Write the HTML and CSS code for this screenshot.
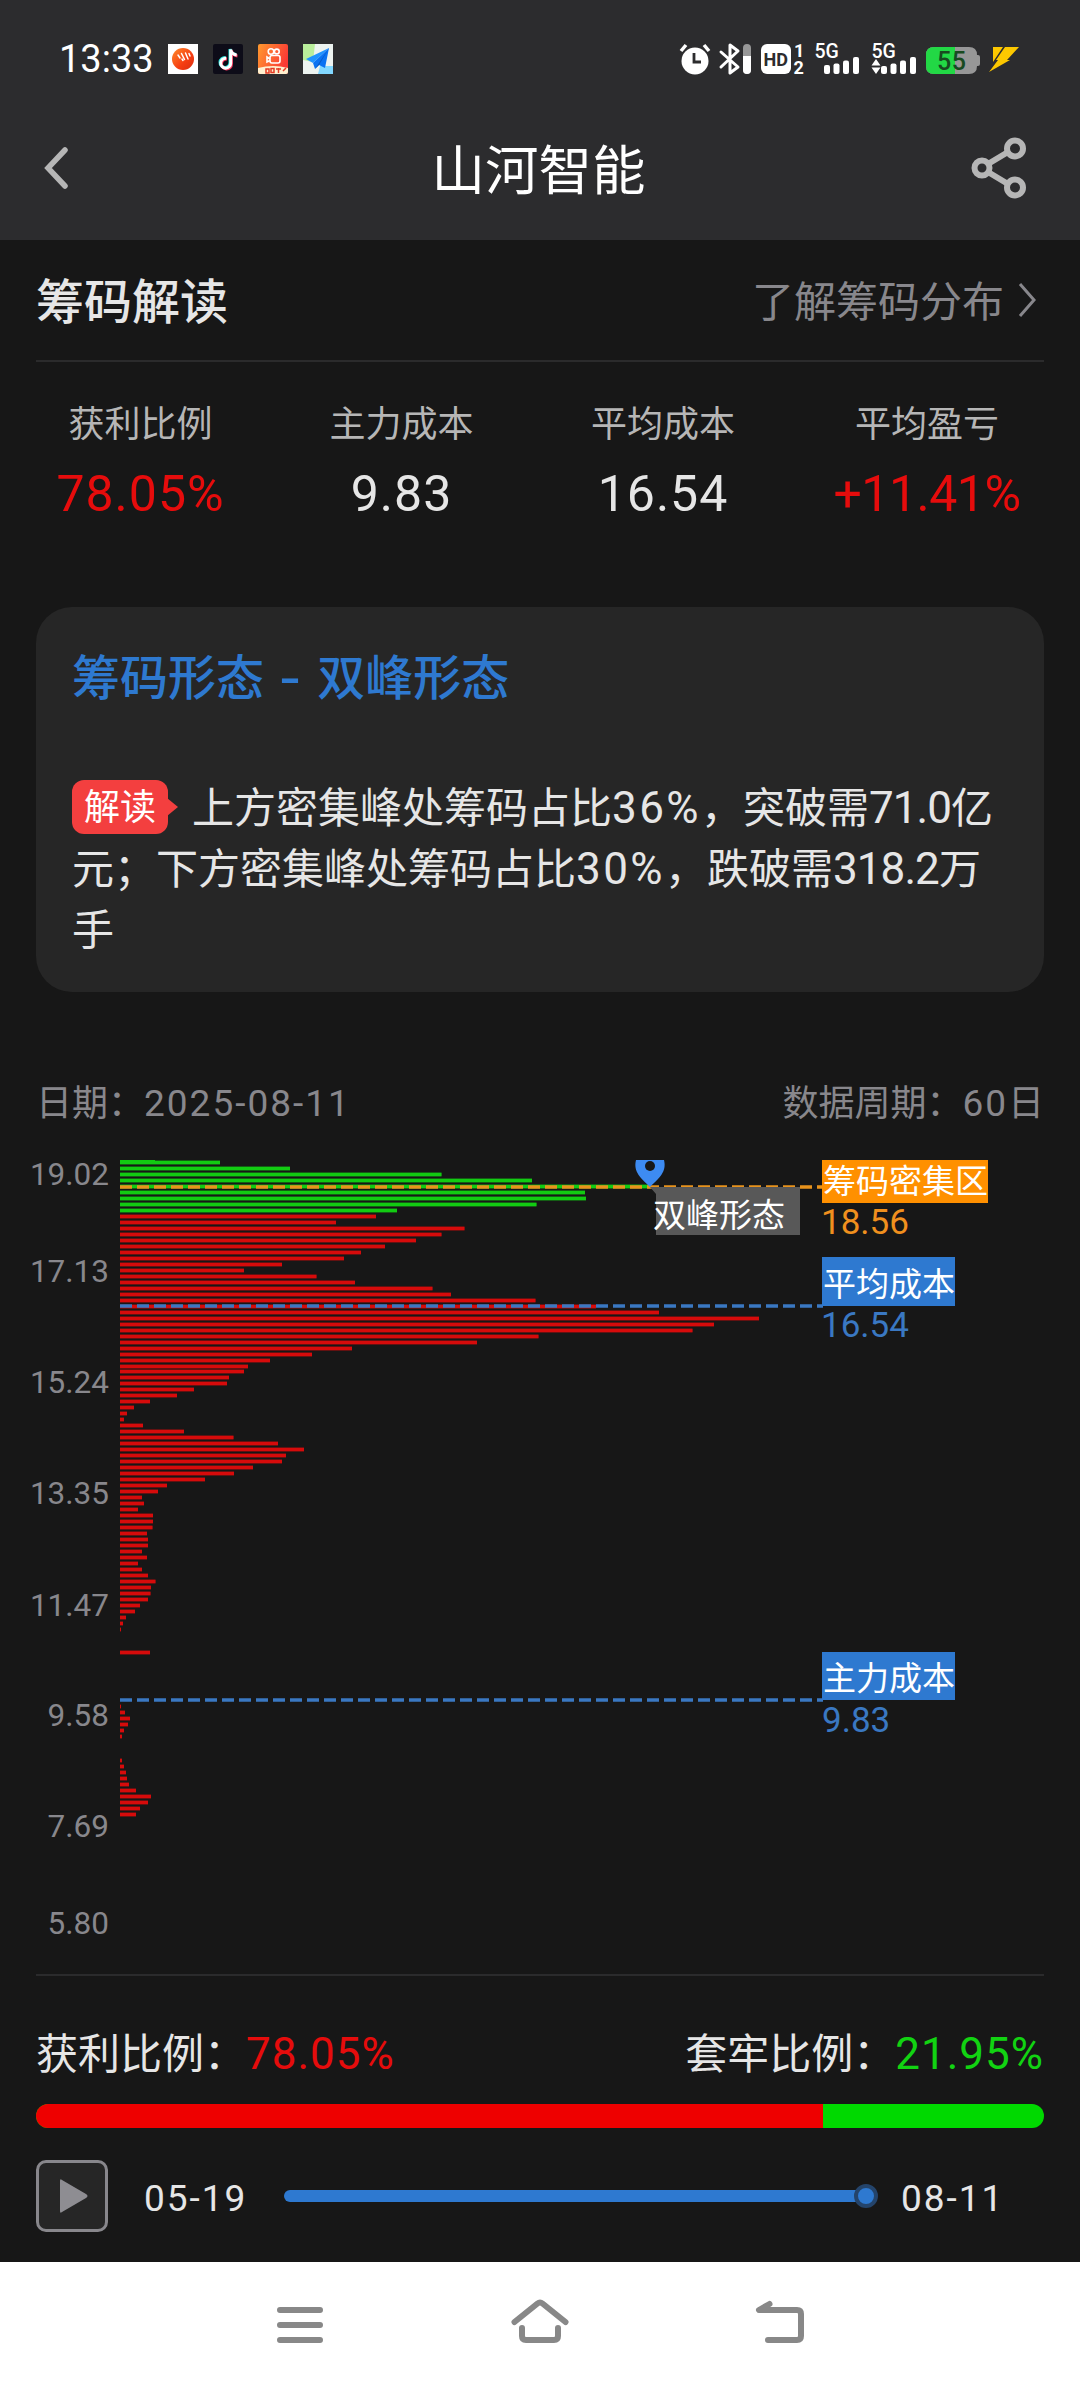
FILE: index.html
```html
<!DOCTYPE html>
<html lang="zh-CN">
<head>
  <meta charset="UTF-8">
  <meta name="viewport" content="width=device-width, initial-scale=1.0">
  <title>山河智能</title>
  <link rel="stylesheet" href="styles.css">
</head>
<body>
  <header class="header">
    <div class="status-bar">
      <span class="time">13:33</span>
      <div class="apps">
        <svg width="30" height="30" viewBox="0 0 30 30">
          <defs>
            <linearGradient id="orange" x1="0" y1="0" x2="1" y2="1"><stop offset="0" stop-color="#ff8a2a"/><stop offset=".6" stop-color="#f53d12"/><stop offset="1" stop-color="#d92d10"/></linearGradient>
          </defs>
          <rect width="30" height="30" fill="#fff"/>
          <circle cx="15" cy="15" r="11" fill="url(#orange)"/>
          <path d="M10 11l2 3M13.500 9.500l3 6M17.500 9l2.500 6M21 9.500l1 2.500M14 15l1 1.500" stroke="#fff" stroke-width="1.500" fill="none" stroke-linecap="round"/>
        </svg>
        <svg width="30" height="30" viewBox="0 0 30 30">
          <rect width="30" height="30" rx="2" fill="#0d0c18"/>
          <g fill="none" stroke-width="3">
            <path d="M12.500 13.500a5 5 0 1 0 4.500 5V5c.5 3 2.500 5 6 5.500" stroke="#2ee6df"/>
            <path d="M14 15a5 5 0 1 0 4.500 5V6.500c.5 3 2.500 5 6 5.500" stroke="#f5365c"/>
            <path d="M13.200 14.200a5 5 0 1 0 4.500 5V5.500c.5 3 2.500 5 6 5.500" stroke="#fff"/>
          </g>
        </svg>
        <svg width="30" height="30" viewBox="0 0 30 30">
          <defs>
            <linearGradient id="kuai" x1="0" y1="0" x2="1" y2=".4"><stop offset="0" stop-color="#ff9a2e"/><stop offset="1" stop-color="#fb3a35"/></linearGradient>
          </defs>
          <rect width="30" height="30" rx="2" fill="url(#kuai)"/>
          <g fill="none" stroke="#fff" stroke-width="1.600">
            <circle cx="13" cy="7.500" r="2.800"/><circle cx="18.800" cy="7.500" r="2.400"/>
            <rect x="12" y="11.500" width="10" height="7.500" rx="2"/><path d="M12 15l-3-2v5l3-1.500"/>
          </g>
          <path d="M0 24q15-4 30 0v4q0 2-2 2H2q-2 0-2-2z" fill="#fff0cf"/>
          <path d="M8 25h3v4H8zM13 24.500h3v4h-3zM18 25h5M20.500 24v5M25 27l3-3" stroke="#e53a25" stroke-width="1.500" fill="none"/>
        </svg>
        <svg width="30" height="30" viewBox="0 0 30 30">
          <rect width="30" height="30" fill="#edf3f0"/>
          <path d="M0 0h12l-2 18-10-2z" fill="#b9ee9b"/><path d="M17 22h13v8H15z" fill="#82d8ff"/>
          <path d="M26 4L3 15l7 4z" fill="#1f93ff"/><path d="M26 4L10 19l2 6 4-4 6 3z" fill="#0a72f2"/>
          <path d="M26 4L12 25l4-4z" fill="#0559c4"/>
        </svg>
      </div>
      <svg class="system" width="340" height="50" viewBox="680 34 340 50">
        <g fill="#fff">
          <circle cx="696" cy="61" r="13.500"/>
          <path d="M682 51l5-6M710 51l-5-6" stroke="#fff" stroke-width="3.500"/>
          <path d="M695 53v9h7" fill="none" stroke="#2c2c2e" stroke-width="2.800"/>
          <path d="M722 52l17 15-8 6V45l8 6-17 16" fill="none" stroke="#fff" stroke-width="3" stroke-linejoin="round" stroke-linecap="round"/>
          <rect x="744" y="44" width="8" height="30" rx="4" fill="#979797"/>
          <path d="M744 56h8v14a4 4 0 0 1-8 0z"/>
          <rect x="762" y="44" width="30" height="30" rx="6"/>
          <text class="hd" x="764.500" y="66" textLength="24.500" lengthAdjust="spacingAndGlyphs">HD</text>
          <text class="sim" x="795" y="57">1</text>
          <text class="sim" x="794.500" y="74">2</text>
          <text class="net" x="815.500" y="58">5G</text>
          <rect x="825" y="65" width="6" height="9" rx="2"/><rect x="834.500" y="63.500" width="6" height="10.500" rx="2"/><rect x="844" y="60.500" width="6" height="13.500" rx="2"/><rect x="854" y="57" width="6" height="17" rx="2"/>
          <text class="net" x="872.500" y="58">5G</text>
          <path d="M877 59l4.500 6.500h-9zM877 74l-4.500-6.500h9z"/>
          <rect x="882" y="66" width="6" height="8" rx="2"/><rect x="891.500" y="63.500" width="6" height="10.500" rx="2"/><rect x="901" y="60.500" width="6" height="13.500" rx="2"/><rect x="911" y="57" width="6" height="17" rx="2"/>
        </g>
        <path d="M935 47h35q8 0 8 8h1q2 0 2 2v7q0 2-2 2h-1q0 8-8 8h-35q-8 0-8-8V55q0-8 8-8z" fill="#979797"/>
        <path d="M956 47h-21q-8 0-8 8v11q0 8 8 8h21z" fill="#22d845"/>
        <text class="battery" x="938" y="70" textLength="29">55</text>
        <path d="M994 47h10l-10 15zM1006 47h14l-12 13h3l-21 12 9-12h-2z" fill="#fdc800"/>
      </svg>
    </div>
    <div class="title-bar">
      <svg width="24" height="42" viewBox="0 0 24 42"><path d="M21 3L4 21l17 18" fill="none" stroke="#b6b6b6" stroke-width="5.500" stroke-linecap="round"/></svg>
      <h1>山河智能</h1>
      <svg width="56" height="62" viewBox="0 0 56 62">
        <g fill="none" stroke="#b6b6b6" stroke-width="6"><path d="M17 27l20-12M17 35l20 12"/><circle cx="11" cy="31" r="7.500"/><circle cx="44" cy="11.500" r="8"/><circle cx="44" cy="50.500" r="8"/></g>
      </svg>
    </div>
  </header>

  <main class="content">
    <div class="section-head">
      <h2>筹码解读</h2>
      <a class="more"><span>了解筹码分布</span><svg width="20" height="36" viewBox="0 0 20 36"><path d="M2 2l14 16L2 34" fill="none" stroke="#88878c" stroke-width="3"/></svg></a>
    </div>

    <div class="stats">
      <div class="stat"><span>获利比例</span><b class="red">78.05%</b></div>
      <div class="stat"><span>主力成本</span><b>9.83</b></div>
      <div class="stat"><span>平均成本</span><b>16.54</b></div>
      <div class="stat"><span>平均盈亏</span><b class="red change">+11.41%</b></div>
    </div>

    <div class="card">
      <h3>筹码形态 <i>-</i> 双峰形态</h3>
      <p><span class="badge">解读</span>上方密集峰处筹码占比<span class="num">36%</span>，突破需<span class="num tight">71.0</span>亿<br>元；下方密集峰处筹码占比<span class="num">30%</span>，跌破需<span class="num tight">318.2</span>万<br>手</p>
    </div>

    <div class="chart-info">
      <span>日期：<span class="date">2025-08-11</span></span>
      <span>数据周期：<span class="date">60</span>日</span>
    </div>

    <svg class="chart" id="chart" width="1080" height="814" viewBox="0 1160 1080 814">
      <g id="bars"></g>
      <g class="axis">
        <text x="109" y="1185">19.02</text>
        <text x="109" y="1282">17.13</text>
        <text x="109" y="1393">15.24</text>
        <text x="109" y="1504">13.35</text>
        <text x="109" y="1615.500">11.47</text>
        <text x="109" y="1726">9.58</text>
        <text x="109" y="1837">7.69</text>
        <text x="109" y="1934">5.80</text>
      </g>
      <g class="dash">
        <path d="M120 1187H823" stroke="#e8931c"/>
        <path d="M120 1306H823" stroke="#3a78c2"/>
        <path d="M120 1700H823" stroke="#3a78c2"/>
      </g>
      <path d="M636 1160h28c3 12-5 18-14 27-9-9-17-15-14-27z" fill="#3d8bf2"/>
      <circle cx="650" cy="1166" r="5" fill="#171717"/>
      <path d="M650 1187h150v48H656v-41z" fill="#585858"/>
      <rect x="822" y="1160" width="166" height="43" fill="#ff9000"/>
      <rect x="822" y="1257" width="133" height="49" fill="#2e79d0"/>
      <rect x="822" y="1652" width="133" height="48" fill="#2e79d0"/>
      <g class="tag">
        <text x="653" y="1227">双峰形态</text>
        <text x="823" y="1192.500">筹码密集区</text>
        <text x="823" y="1295.500">平均成本</text>
        <text x="823" y="1689.500">主力成本</text>
      </g>
      <g class="price">
        <text x="821" y="1234" fill="#f0901e">18.56</text>
        <text x="821" y="1337" fill="#3a78c2">16.54</text>
        <text x="822" y="1732" fill="#3a78c2">9.83</text>
      </g>
    </svg>

    <div class="ratio">
      <span>获利比例：<b class="red">78.05%</b></span>
      <span>套牢比例：<b class="green">21.95%</b></span>
    </div>
    <div class="ratio-bar"><div style="width: 78.05%"></div></div>

    <div class="player">
      <button class="play"><svg width="30" height="36" viewBox="0 0 30 36"><path d="M1 3q0-3 2-1l24 14q3 2 0 4L3 34q-2 2-2-1z" fill="#8e8d92"/></svg></button>
      <span class="start">05-19</span>
      <div class="track"><div class="thumb"></div></div>
      <span class="end">08-11</span>
    </div>
  </main>

  <nav class="nav">
    <svg width="540" height="60" viewBox="270 2290 540 60">
      <g fill="none" stroke="#888" stroke-width="6" stroke-linecap="round" stroke-linejoin="round">
        <path d="M280 2310h40M280 2325h40M280 2340h40"/>
        <path d="M514.500 2322l23-18.500q2.500-2 5 0l23 18.500M522 2328v8q0 4 4 4h28q4 0 4-4v-8"/>
        <path d="M769.500 2304l-10.500 6h38q4 0 4 4v22q0 4-4 4h-29"/>
      </g>
    </svg>
  </nav>

  <script>
    // bar end x by price level, top to bottom (0 = no chips)
    const levels = [
      155, 220, 290, 441.5, 532, 650, 585, 586, 536.5, 397,
      376, 336, 464.5, 441.5, 416, 385, 361, 344, 282, 244, 316.5, 355, 432.5, 451, 535.5, 596,
      659, 759, 714, 692.5, 538.5, 477, 352, 312, 270, 248, 244, 229, 227, 194, 177, 150, 134, 127, 124,
      143, 184, 233.5, 278, 304, 286, 282, 253, 234, 205, 167, 158, 142, 144, 138, 153, 153, 152.5,
      147, 148, 148, 142, 147, 138, 142, 148, 155.5, 151, 150.5, 148, 140, 135, 126, 123, 121,
      0, 0, 0, 150, 0, 0, 0, 0, 0, 0, 0, 0, 121, 125, 130, 128, 124, 122,
      0, 0, 0, 122, 124, 126, 127, 129, 136, 151, 148, 140, 136
    ];
    let html = '';
    levels.forEach((end, i) => {
      if (!end) return;
      const y = i === 0 ? 1159 : Math.round(1161.3 + (i - 1) * 5.977);
      const color = i < 10 ? '#12cb12' : '#d60b0b';
      html += `<rect x="120" y="${y - 1}" width="${end - 120}" height="5" fill="${color}" opacity=".4"/>`;
      html += `<rect x="120" y="${y}" width="${end - 120}" height="3" fill="${color}"/>`;
    });
    document.getElementById('bars').innerHTML = html;
  </script>
</body>
</html>
```

FILE: styles.css
```css
* {
  box-sizing: border-box;
}
body {
  margin: 0;
  width: 1080px;
  height: 2388px;
  background: #171717;
  color: #e6e6e6;
  font-family: Roboto, "Noto Sans CJK SC", sans-serif;
}
h1, h2, h3, p {
  margin: 0;
}
svg {
  display: block;
}
b {
  font-weight: 400;
}
.header {
  height: 240px;
  background: #2c2c2e;
}
.status-bar {
  display: flex;
  align-items: center;
  height: 118px;
  padding: 0 61px 0 59px;
}
.time {
  width: 109px;
  font-size: 38px;
  color: #fff;
}
.apps {
  display: flex;
  gap: 15px;
}
.system {
  margin-left: auto;
}
.hd {
  font-size: 19px;
  font-weight: 700;
  fill: #2c2c2e;
}
.sim {
  font-size: 18px;
  font-weight: 700;
}
.net {
  font-size: 19.500px;
  font-weight: 500;
}
.battery {
  font-size: 25px;
  font-weight: 500;
  fill: #184a20;
}
.title-bar {
  display: flex;
  justify-content: space-between;
  align-items: center;
  height: 100px;
  padding: 0 53px 0 44px;
}
.title-bar h1 {
  font-size: 53.500px;
  font-weight: 400;
  line-height: 96px;
  color: #fff;
  margin-left: 38px;
  padding-top: 7px;
}
.red {
  color: #e60c0c;
}
.green {
  color: #12d312;
}
.section-head {
  display: flex;
  justify-content: space-between;
  align-items: center;
  height: 122px;
  margin: 0 36px;
  border-bottom: 2px solid #2b2b2c;
}
.section-head h2 {
  font-size: 48px;
  font-weight: 500;
  line-height: 64px;
  padding-top: 6px;
}
.more {
  display: flex;
  align-items: center;
  gap: 14px;
  font-size: 42px;
  line-height: 60px;
  color: #88878c;
  margin-right: 6px;
}
.more span {
  padding-top: 5px;
}
.stats {
  display: grid;
  grid-template-columns: 261px 261px 262px 266px;
  margin: 0 10px;
  height: 245px;
}
.stat {
  text-align: center;
  padding-top: 35px;
}
.stat span {
  display: block;
  font-size: 36px;
  line-height: 56px;
  color: #b6b6b6;
}
.stat b {
  display: block;
  font-size: 50px;
  line-height: 82px;
  letter-spacing: 1px;
}
.stat .change {
  letter-spacing: -0.500px;
}
.card {
  height: 385px;
  margin: 0 36px;
  padding: 40px 36px;
  border-radius: 36px;
  background: #262626;
}
.card h3 {
  font-size: 48px;
  line-height: 64px;
  font-weight: 500;
  color: #2e79d0;
}
.card h3 i {
  display: inline-block;
  font-style: normal;
  transform: scaleX(1.3);
  margin: 0 6.500px;
}
.card p {
  margin-top: 67px;
  font-size: 42px;
  line-height: 61px;
  white-space: nowrap;
}
.num {
  font-size: 44px;
  line-height: 1;
  letter-spacing: 2.400px;
}
.tight {
  letter-spacing: -0.900px;
}
.badge {
  display: inline-block;
  position: relative;
  width: 96px;
  height: 54px;
  margin-right: 24px;
  border-radius: 12px;
  background: #f33f3f;
  color: #fff;
  font-size: 36px;
  line-height: 56px;
  text-align: center;
  vertical-align: 3px;
}
.badge::after {
  content: "";
  position: absolute;
  left: 95px;
  top: 18px;
  border: 9px solid transparent;
  border-left: 11px solid #f33f3f;
  border-right: 0;
}
.chart-info {
  display: flex;
  justify-content: space-between;
  align-items: center;
  height: 168px;
  padding: 55px 36px 0;
  font-size: 36px;
  line-height: 56px;
  color: #88878c;
}
.date {
  font-size: 37px;
  letter-spacing: 2px;
}
.axis {
  font-size: 31.500px;
  fill: #88878c;
  text-anchor: end;
}
.dash {
  fill: none;
  stroke-width: 3.500;
  stroke-dasharray: 12 5;
}
.tag {
  font-size: 33px;
  fill: #fff;
}
.price {
  font-size: 35px;
}
.ratio {
  display: flex;
  justify-content: space-between;
  height: 130px;
  margin: 0 36px;
  border-top: 2px solid #2b2b2c;
  padding-top: 46px;
  font-size: 42px;
  line-height: 64px;
}
.ratio b {
  font-size: 44px;
  letter-spacing: 1px;
}
.ratio-bar {
  height: 24px;
  margin: 0 36px;
  border-radius: 12px;
  background: #00d900;
  overflow: hidden;
}
.ratio-bar div {
  height: 24px;
  background: #ee0000;
}
.player {
  display: flex;
  align-items: center;
  margin: 32px 36px 0;
  font-size: 37px;
  letter-spacing: 2px;
}
.play {
  display: flex;
  align-items: center;
  justify-content: center;
  width: 72px;
  height: 72px;
  padding: 0 0 0 3px;
  border: 3px solid #88878c;
  border-radius: 10px;
  background: #262626;
}
.start {
  margin-left: 36px;
  padding-top: 4px;
}
.end {
  width: 143px;
  padding-top: 4px;
}
.track {
  position: relative;
  width: 588px;
  height: 12px;
  margin: 0 29px 0 auto;
  border-radius: 6px;
  background: #2e79d0;
}
.thumb {
  position: absolute;
  right: -6px;
  top: -6px;
  width: 24px;
  height: 24px;
  border: 4px solid #24446b;
  border-radius: 50%;
  background: #2e79d0;
}
.nav {
  display: flex;
  justify-content: center;
  height: 126px;
  margin-top: 30px;
  padding-top: 28px;
  background: #fff;
}
```
